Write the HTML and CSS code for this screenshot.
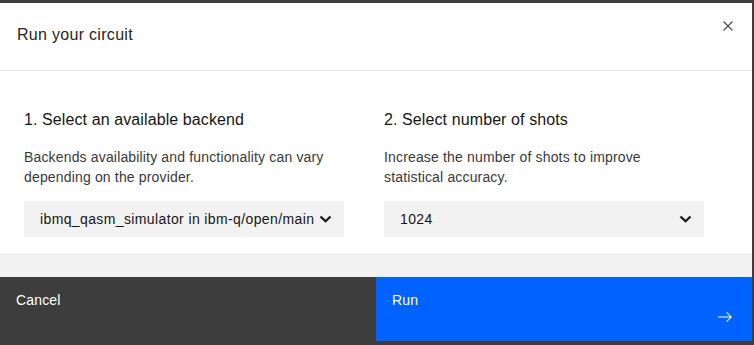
FILE: index.html
```html
<!DOCTYPE html>
<html lang="en">
<head>
    <meta charset="UTF-8">
    <meta name="viewport" content="width=device-width, initial-scale=1.0">
    <title>Run your circuit</title>
    <link rel="stylesheet" href="styles.css">
</head>
<body>
    <div class="modal">
        <div class="modal-header">
            <h2 class="modal-title">Run your circuit</h2>
            <button class="close" aria-label="Close">
                <svg width="20" height="20" viewBox="0 0 20 20"><path d="M15 5.9L14.1 5 10 9.1 5.9 5 5 5.9 9.1 10 5 14.1 5.9 15 10 10.9 14.1 15 15 14.1 10.9 10z"/></svg>
            </button>
        </div>
        <div class="modal-body">
            <div class="step">
                <h3>1. Select an available backend</h3>
                <p>Backends availability and functionality can vary depending on the provider.</p>
                <div class="select">
                    <span class="value">ibmq_qasm_simulator in ibm-q/open/main</span>
                    <svg class="chevron" width="13" height="8" viewBox="0 0 13 8"><polyline points="1.5,1.5 6.5,6.3 11.5,1.5"/></svg>
                </div>
            </div>
            <div class="step">
                <h3>2. Select number of shots</h3>
                <p>Increase the number of shots to improve statistical accuracy.</p>
                <div class="select">
                    <span class="value">1024</span>
                    <svg class="chevron" width="13" height="8" viewBox="0 0 13 8"><polyline points="1.5,1.5 6.5,6.3 11.5,1.5"/></svg>
                </div>
            </div>
        </div>
        <div class="modal-strip"></div>
        <div class="modal-footer">
            <button class="btn secondary">Cancel</button>
            <button class="btn primary">
                <span>Run</span>
                <svg class="arrow" width="16" height="16" viewBox="0 0 16 16"><path d="M9.3 3.7L13.1 7.5 1 7.5 1 8.5 13.1 8.5 9.3 12.3 10 13 15 8 10 3z"/></svg>
            </button>
        </div>
    </div>
</body>
</html>
```
FILE: styles.css
```css
body {
    margin: 0;
    background-color: #3d3d3d;
    font-family: "Liberation Sans", Arial, sans-serif;
    color: #161616;
    height: 345px;
    overflow: hidden;
}
.modal {
    margin-top: 3px;
    width: 752px;
    height: 338px;
    background-color: #ffffff;
    display: flex;
    flex-direction: column;
}
.modal-header {
    border-bottom: 1px solid #e0e0e0;
    display: flex;
    justify-content: space-between;
    align-items: flex-start;
    padding: 21px 14px 0 17px;
    height: 46px;
}
.modal-title {
    margin: 0;
    font-size: 16px;
    font-weight: 400;
    line-height: 22px;
    letter-spacing: 0.3px;
    color: #262626;
}
.close {
    background: none;
    border: none;
    padding: 0;
    margin-top: -8px;
    width: 20px;
    height: 20px;
    cursor: pointer;
}
.close svg {
    display: block;
    fill: #525252;
}
.modal-body {
    display: flex;
    gap: 40px;
    padding: 38px 24px 16px 24px;
}
.step {
    width: 320px;
}
.step h3 {
    margin: 0 0 16px 0;
    font-size: 16px;
    font-weight: 400;
    line-height: 22px;
    letter-spacing: 0.1px;
    color: #161616;
}
.step p {
    margin: 0 0 14px 0;
    font-size: 14px;
    line-height: 20px;
    letter-spacing: 0.16px;
    color: #393939;
    height: 40px;
    width: 310px;
}
.select {
    height: 36px;
    background-color: #f2f2f2;
    display: flex;
    align-items: center;
    padding: 0 12px 0 16px;
    font-size: 14px;
    letter-spacing: 0.38px;
    color: #161616;
}
.select .value {
    flex: 1;
    white-space: nowrap;
}
.chevron {
    display: block;
    fill: none;
    stroke: #161616;
    stroke-width: 2.2;
}
.modal-strip {
    height: 24px;
    background-color: #f2f2f2;
}
.modal-footer {
    display: flex;
    height: 64px;
}
.btn {
    flex: 1;
    border: none;
    margin: 0;
    display: flex;
    justify-content: space-between;
    align-items: flex-start;
    padding: 14px 19px 14px 16px;
    font-family: inherit;
    font-size: 14px;
    line-height: 18px;
    letter-spacing: 0.16px;
    color: #ffffff;
    text-align: left;
    cursor: pointer;
}
.btn.secondary {
    background-color: #3d3d3d;
}
.btn.primary {
    background-color: #0062ff;
}
.arrow {
    align-self: flex-end;
    margin-bottom: 2px;
    fill: #ffffff;
}
```
